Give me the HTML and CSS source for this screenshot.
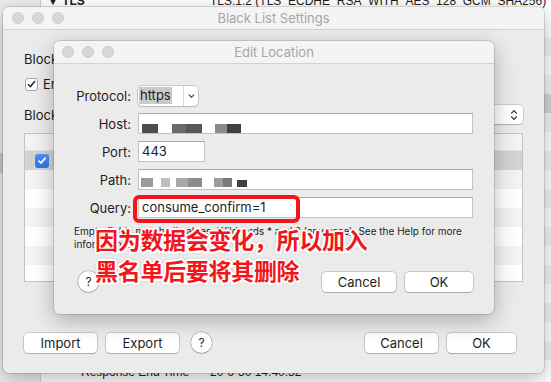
FILE: index.html
```html
<!DOCTYPE html>
<html lang="en">
<head>
    <meta charset="UTF-8">
    <title>Black List Settings</title>
    <link rel="stylesheet" href="styles.css">
</head>
<body>
    <!-- session window behind the sheets -->
    <div class="app">
        <div class="sidebar">
            <div class="side-item"></div>
        </div>
        <div class="rows">
            <div class="row first"><span class="key bold">&#9660; TLS</span><span class="val">TLS:1.2 (TLS_ECDHE_RSA_WITH_AES_128_GCM_SHA256)</span></div>
            <div class="row"></div>
            <div class="row"></div>
            <div class="row"></div>
            <div class="row"></div>
            <div class="row sel"></div>
            <div class="row"></div>
            <div class="row"></div>
            <div class="row"></div>
            <div class="row"></div>
            <div class="row"></div>
            <div class="row"></div>
            <div class="row"></div>
            <div class="row"></div>
            <div class="row"></div>
            <div class="row"></div>
            <div class="row"></div>
            <div class="row"></div>
            <div class="row"></div>
            <div class="row last"><span class="key sub">Response End Time</span><span class="val">20-6-30 14:40:52</span></div>
        </div>
    </div>

    <!-- Black List Settings -->
    <div class="window outer">
        <div class="titlebar">
            <div class="lights"><span class="light"></span><span class="light"></span><span class="light"></span></div>
            <div class="title">Black List Settings</div>
        </div>
        <div class="outer-body">
            <p class="lead">Block requests made to the locations listed below.</p>
            <label class="check">
                <span class="box">
                    <svg width="9" height="8" viewBox="0 0 9 8"><path d="M1 4.2 L3.4 6.6 L8 1" fill="none" stroke="#2b2b2b" stroke-width="1.5"/></svg>
                </span>
                Enable Black List
            </label>
            <div class="action-row">
                <span>Blocking action:</span>
                <div class="stepper">
                    <span>Drop connection</span>
                    <svg width="8" height="12" viewBox="0 0 8 12"><path d="M1.2 4.5 L4 1.7 L6.8 4.5 M1.2 7.5 L4 10.3 L6.8 7.5" fill="none" stroke="#3a3a3a" stroke-width="1.2"/></svg>
                </div>
            </div>
            <div class="table">
                <div class="trow head"></div>
                <div class="trow sel">
                    <span class="blue-box">
                        <svg width="10" height="9" viewBox="0 0 10 9"><path d="M1.5 4.6 L4 7 L8.6 1.6" fill="none" stroke="#fff" stroke-width="1.8"/></svg>
                    </span>
                </div>
                <div class="trow"></div>
                <div class="trow"></div>
                <div class="trow"></div>
                <div class="trow"></div>
                <div class="trow"></div>
                <div class="trow"></div>
            </div>
            <div class="footer">
                <button class="btn">Import</button>
                <button class="btn">Export</button>
                <button class="help">?</button>
                <span class="spacer"></span>
                <button class="btn">Cancel</button>
                <button class="btn ok">OK</button>
            </div>
        </div>
    </div>

    <!-- Edit Location sheet -->
    <div class="window inner">
        <div class="titlebar">
            <div class="lights"><span class="light"></span><span class="light"></span><span class="light"></span></div>
            <div class="title">Edit Location</div>
        </div>
        <div class="inner-body">
            <div class="form">
                <label>Protocol:</label>
                <div class="combo">
                    <span class="combo-text"><span class="picked">https</span></span>
                    <span class="combo-btn">
                        <svg width="7" height="4" viewBox="0 0 7 4"><path d="M0.8 0.6 L3.5 3.2 L6.2 0.6" fill="none" stroke="#444" stroke-width="1.1"/></svg>
                    </span>
                </div>

                <label>Host:</label>
                <div class="field">
                    <svg class="mosaic" width="110" height="21" viewBox="0 0 110 21">
                        <g filter="url(#soft)">
                            <rect x="2" y="11" width="16" height="9" fill="#4d4d4d"/>
                            <rect x="32" y="11" width="14" height="9" fill="#6a6a6a"/>
                            <rect x="46" y="11" width="16" height="9" fill="#585858"/>
                            <rect x="75" y="11" width="12" height="9" fill="#8a8a8a"/>
                            <rect x="87" y="11" width="14" height="9" fill="#3f3f3f"/>
                        </g>
                        <defs><filter id="soft"><feGaussianBlur stdDeviation="0.7"/></filter></defs>
                    </svg>
                </div>

                <label>Port:</label>
                <div class="field port">443</div>

                <label>Path:</label>
                <div class="field">
                    <svg class="mosaic" width="115" height="21" viewBox="0 0 115 21">
                        <g filter="url(#soft2)">
                            <rect x="1" y="9" width="12" height="9" fill="#9a9a9a"/>
                            <rect x="21" y="9" width="9" height="9" fill="#bdbdbd"/>
                            <rect x="36" y="9" width="12" height="9" fill="#a8a8a8"/>
                            <rect x="48" y="9" width="14" height="9" fill="#8c8c8c"/>
                            <rect x="74" y="9" width="9" height="9" fill="#9c9c9c"/>
                            <rect x="83" y="9" width="9" height="9" fill="#7a7a7a"/>
                            <rect x="97" y="11" width="10" height="7" fill="#404040"/>
                        </g>
                        <defs><filter id="soft2"><feGaussianBlur stdDeviation="0.7"/></filter></defs>
                    </svg>
                </div>

                <label>Query:</label>
                <div class="field">consume_confirm=1</div>
            </div>
            <p class="hint">Empty fields match all values. Wildcards * and ? (any case). See the Help for more information.</p>
            <div class="footer">
                <button class="help">?</button>
                <span class="spacer"></span>
                <button class="btn">Cancel</button>
                <button class="btn ok">OK</button>
            </div>
        </div>
    </div>

    <!-- annotation drawn over the screenshot -->
    <div class="redbox"></div>
    <div class="note">因为数据会变化，所以加入<br>黑名单后要将其删除</div>
</body>
</html>
```

FILE: styles.css
```css
* {
    box-sizing: border-box;
}

body {
    margin: 0;
    width: 551px;
    height: 382px;
    overflow: hidden;
    position: relative;
    font-family: Inter, "Liberation Sans", sans-serif;
    font-size: 13px;
    color: #1d1d1d;
    background: #ffffff;
}

/* background app */
.app {
    display: grid;
    grid-template-columns: 41px 1fr;
    height: 382px;
    font-family: "Liberation Sans", Arial, sans-serif;
    font-size: 12px;
}

.sidebar {
    background: #ececec;
    border-right: 1px solid #d2d2d2;
    padding-top: 153px;
}

.side-item {
    height: 20px;
    background: #c9c9c9;
}

.rows {
    margin-top: -8px;
}

.row {
    display: flex;
    height: 19px;
    line-height: 19px;
    white-space: nowrap;
}

.row:nth-child(odd) {
    background: #f3f3f3;
}

.row.first {
    height: 26px;
    background: #ffffff;
}

.row.sel {
    background: #d4d4d4;
}

.row.last {
    height: 22px;
    padding-top: 3px;
}

.key {
    width: 169px;
    padding-left: 6px;
}

.key.sub {
    padding-left: 40px;
}

.bold {
    font-weight: 700;
}

/* dialogs */
.window {
    position: absolute;
    display: flex;
    flex-direction: column;
    background: #ebebeb;
    border-radius: 6px;
    overflow: hidden;
    box-shadow: 0 0 0 1px rgba(0, 0, 0, 0.12), 0 6px 22px rgba(0, 0, 0, 0.28);
}

.outer {
    left: 3px;
    top: 7px;
    width: 541px;
    height: 366px;
}

.inner {
    left: 54px;
    top: 41px;
    width: 440px;
    height: 273px;
}

.titlebar {
    display: grid;
    grid-template-columns: 1fr auto 1fr;
    align-items: center;
    height: 23px;
    flex-shrink: 0;
    background: #f4f4f4;
    border-bottom: 1px solid #d2d2d2;
}

.lights {
    display: flex;
    gap: 8px;
    padding-left: 9px;
}

.inner .lights {
    padding-left: 8px;
}

.light {
    width: 12px;
    height: 12px;
    border-radius: 50%;
    background: #d7d7d7;
    border: 1px solid #cbcbcb;
}

.title {
    color: #a6a6a6;
}

.outer-body {
    display: flex;
    flex-direction: column;
    padding: 21px 21px 0 21px;
}

.lead {
    margin: 0;
    line-height: 16px;
    white-space: nowrap;
}

.check {
    display: flex;
    align-items: center;
    gap: 5px;
    height: 16px;
    margin-top: 9px;
    padding-left: 1px;
}

.box {
    display: flex;
    align-items: center;
    justify-content: center;
    width: 13px;
    height: 13px;
    background: #ffffff;
    border: 1px solid #a8a8a8;
    border-radius: 3px;
}

.action-row {
    display: flex;
    align-items: center;
    gap: 8px;
    height: 19px;
    margin-top: 13px;
}

.stepper {
    flex: 1;
    display: flex;
    align-items: center;
    justify-content: space-between;
    height: 19px;
    padding: 0 5px 0 8px;
    background: #ffffff;
    border-radius: 4px;
    box-shadow: 0 0 0 0.5px rgba(0, 0, 0, 0.25), 0 1px 1px rgba(0, 0, 0, 0.12);
}

.table {
    height: 149px;
    margin-top: 9px;
    background: #ffffff;
    border: 1px solid #c3c3c3;
    overflow: hidden;
}

.trow {
    display: flex;
    align-items: center;
    height: 19px;
    padding-left: 10px;
}

.trow.head {
    height: 17px;
    border-bottom: 1px solid #e2e2e2;
}

.trow:nth-child(odd) {
    background: #f3f3f3;
}

.trow.sel {
    background: #d3d3d3;
}

.blue-box {
    display: flex;
    align-items: center;
    justify-content: center;
    width: 14px;
    height: 14px;
    border-radius: 3px;
    background: linear-gradient(#4c93f8, #2a74ee);
}

.footer {
    display: flex;
    align-items: center;
    margin-top: 50px;
    padding-right: 7px;
}

.btn {
    width: 73px;
    height: 20px;
    margin-right: 9px;
    padding: 0;
    font: inherit;
    color: #1d1d1d;
    background: #ffffff;
    border: none;
    border-radius: 4px;
    box-shadow: 0 0 0 0.5px rgba(0, 0, 0, 0.3), 0 1px 1px rgba(0, 0, 0, 0.14);
}

.btn.ok {
    width: 69px;
    margin-right: 0;
}

.help {
    width: 21px;
    height: 21px;
    margin-left: 3px;
    padding: 0;
    font: inherit;
    font-size: 12px;
    color: #2a2a2a;
    background: #ffffff;
    border: none;
    border-radius: 50%;
    box-shadow: 0 0 0 0.5px rgba(0, 0, 0, 0.3), 0 1px 1px rgba(0, 0, 0, 0.16);
}

.spacer {
    flex: 1;
}

/* edit location sheet */
.inner-body {
    flex: 1;
    display: flex;
    flex-direction: column;
    padding: 21px 21px 22px 20px;
}

.form {
    display: grid;
    grid-template-columns: 57px 1fr;
    grid-auto-rows: 21px;
    column-gap: 7px;
    row-gap: 7px;
    align-items: center;
}

.form label {
    text-align: right;
    white-space: nowrap;
}

.combo {
    display: flex;
    width: 60px;
    height: 20px;
    background: #ffffff;
    border-radius: 4px;
    box-shadow: 0 0 0 0.5px rgba(0, 0, 0, 0.3), 0 1px 1px rgba(0, 0, 0, 0.1);
}

.combo-text {
    display: flex;
    align-items: center;
    width: 45px;
    padding-left: 1px;
}

.picked {
    padding: 0 1px;
    line-height: 17px;
    background: #cacaca;
}

.combo-btn {
    flex: 1;
    display: flex;
    align-items: center;
    justify-content: center;
    border-left: 1px solid #d9d9d9;
}

.field {
    height: 21px;
    padding-left: 3px;
    line-height: 19px;
    background: #ffffff;
    border: 1px solid #c2c2c2;
    border-top-color: #a9a9a9;
    overflow: hidden;
}

.field.port {
    width: 67px;
}

.mosaic {
    display: block;
    margin: -1px 0 0 -2px;
}

.hint {
    width: 399px;
    margin: 7px 0 0;
    font-size: 10px;
    line-height: 13px;
}

.inner-body .footer {
    margin-top: auto;
    padding-right: 0;
}

.inner-body .help {
    margin-left: 4px;
}

.inner-body .btn {
    width: 74px;
}

.inner-body .btn.ok {
    width: 68px;
}

/* annotation */
.redbox {
    position: absolute;
    left: 133px;
    top: 195px;
    width: 167px;
    height: 28px;
    border: 4px solid #f2161c;
    border-radius: 6px;
}

.note {
    position: absolute;
    left: 95px;
    top: 224px;
    font-family: "Noto Sans CJK SC", sans-serif;
    font-size: 23px;
    font-weight: 700;
    line-height: 31px;
    letter-spacing: -0.3px;
    color: #f2161c;
    white-space: nowrap;
    text-shadow: 2px 0 #fff, -2px 0 #fff, 0 2px #fff, 0 -2px #fff,
        1.5px 1.5px #fff, -1.5px 1.5px #fff, 1.5px -1.5px #fff, -1.5px -1.5px #fff,
        0 0 4px rgba(0, 0, 0, 0.35);
}
```
